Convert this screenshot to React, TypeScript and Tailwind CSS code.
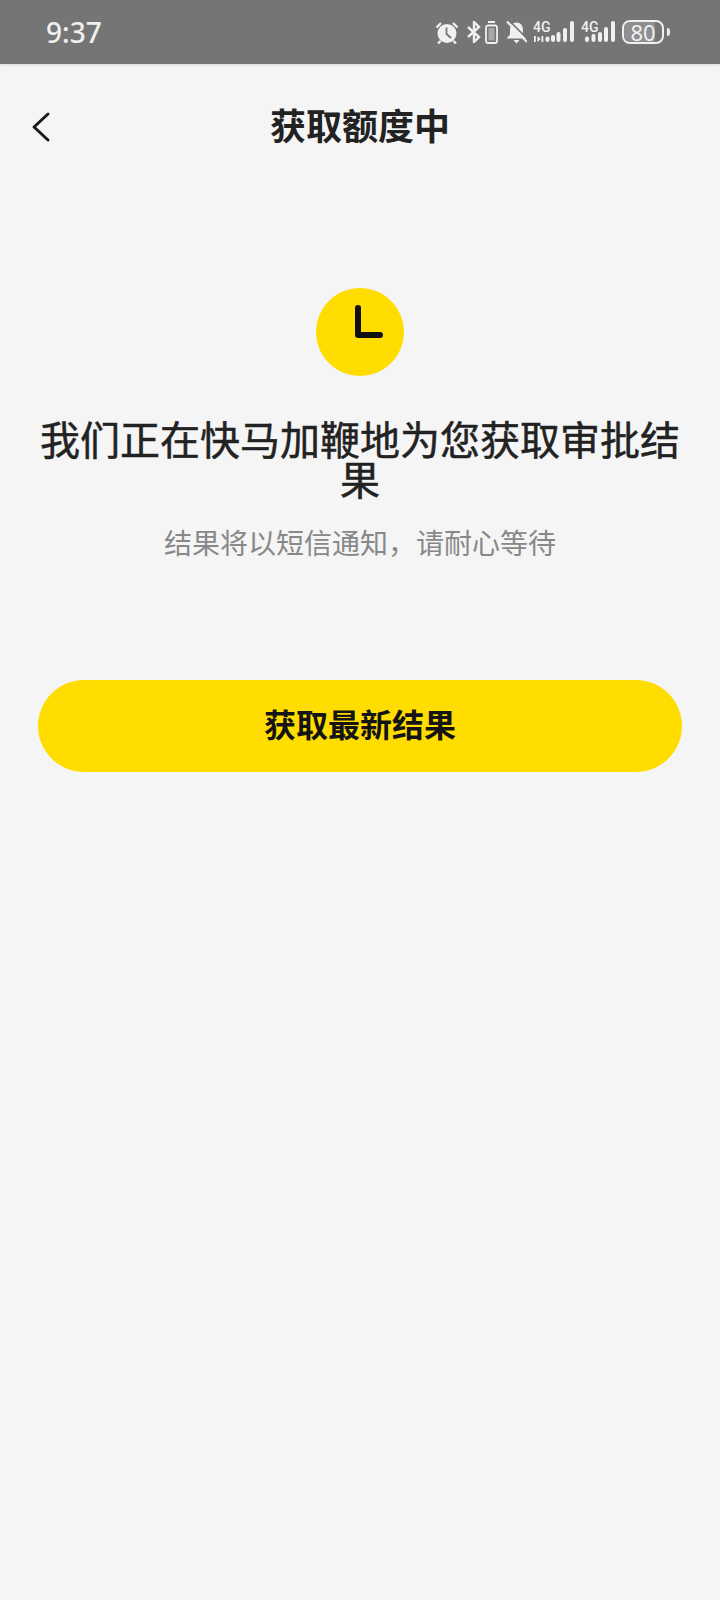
const SANS = "font-['Noto_Sans_CJK_SC','Noto_Sans',sans-serif]";
const LIGHT = "#f0f0f0";

function Alarm() {
  return (
    <svg width="24" height="23" viewBox="0 0 24 23">
      <circle cx="12" cy="12.500" r="9.500" fill={LIGHT} />
      <path d="M11.500 6.500v6.500l4.500 4" fill="none" stroke="#757575" strokeWidth="1.800" />
      <path d="M1.500 6.500L6 2M22.500 6.500L18 2M5.500 20l-2.500 2.500M18.500 20l2.500 2.500" fill="none" stroke={LIGHT} strokeWidth="2.400" />
    </svg>
  );
}

function Bluetooth() {
  return (
    <svg width="14" height="22" viewBox="0 0 14 22" fill="none" stroke={LIGHT} strokeWidth="2.400">
      <path d="M1 6l11 10-5 5V1l5 5L1 16" />
    </svg>
  );
}

function VibrateBattery() {
  return (
    <svg width="13" height="23" viewBox="0 0 13 23">
      <rect x="3" y="0" width="7" height="2" fill={LIGHT} />
      <rect x="1" y="4.500" width="11" height="17.500" rx="2" fill="none" stroke={LIGHT} strokeWidth="1.800" />
      <rect x="3.500" y="7" width="6" height="12.500" fill="#a8a8a8" />
    </svg>
  );
}

function BellOff() {
  return (
    <svg width="21" height="23" viewBox="0 0 21 23">
      <path d="M10.500 1.500c4 0 6.500 3 6.500 7.500v4.500l3.500 4H.5l3.500-4V9c0-4.500 2.500-7.500 6.500-7.500z" fill={LIGHT} />
      <path d="M7.500 19h6l-3 3.500z" fill={LIGHT} />
      <path d="M3.500 0L23 19.500" stroke="#757575" strokeWidth="1.600" />
      <path d="M1 0.500L21 21" stroke={LIGHT} strokeWidth="2.200" />
    </svg>
  );
}

function Signal({ first }: { first: boolean }) {
  const bars = first
    ? [
        [12.500, 15.500],
        [18, 14],
        [23.500, 11],
        [30, 7],
        [37, 0],
      ]
    : [
        [4, 15.500],
        [10.500, 13],
        [17, 11],
        [23, 6],
        [30, 0],
      ];
  return (
    <svg width={first ? 41 : 34} height="28" viewBox={`0 -3 ${first ? 41 : 34} 28`} fill={LIGHT}>
      <text x="0" y="11" fontSize="14" fontWeight="500" fontFamily="Roboto, sans-serif">
        4G
      </text>
      {first ? <path d="M1 15h1.800v6H1zM4.500 15l3.200 3-3.200 3zM8.500 15h1.800v6H8.500z" /> : null}
      {bars.map(([x, y]) => (
        <rect key={x} x={x} y={y} width="4" height={21 - y} rx="2" />
      ))}
    </svg>
  );
}

function Battery() {
  return (
    <div className="flex items-center gap-[3px]">
      <div className="relative h-[24px] w-[42px] rounded-[8px] border-2 border-[#f0f0f0]">
        <div className="h-full w-[31px] rounded-l-[6px] bg-[#8f8f8f]" />
        <span className="absolute inset-0 flex items-center justify-center font-['Noto_Sans',sans-serif] text-[22px] leading-none text-[#f0f0f0]">
          80
        </span>
      </div>
      <div className="h-[8px] w-[3px] rounded-r-full bg-[#f0f0f0]" />
    </div>
  );
}

export default function App() {
  return (
    <div className={`flex h-[1600px] w-[720px] flex-col bg-[#f5f5f5] ${SANS}`}>
      <div className="flex h-16 shrink-0 items-center justify-between bg-[#757575] pl-[46px] pr-[50px] shadow-[0_1px_3px_rgba(0,0,0,0.12)]">
        <span className="font-['Noto_Sans',sans-serif] text-[28px] font-medium leading-none text-[#f0f0f0]">9:37</span>
        <div className="flex items-center">
          <Alarm />
          <div className="ml-2 flex items-center gap-1">
            <Bluetooth />
            <VibrateBattery />
          </div>
          <div className="ml-2"><BellOff /></div>
          <div className="ml-[6px]"><Signal first /></div>
          <div className="ml-[7px]"><Signal first={false} /></div>
          <div className="ml-[7px]"><Battery /></div>
        </div>
      </div>

      <div className="relative flex h-[126px] shrink-0 items-start justify-center pt-[40px]">
        <svg width="20" height="32" viewBox="0 0 20 32" fill="none" className="absolute left-[31px] top-[47px]">
          <path d="M17 3L3 16l14 13" stroke="#1a1a1a" strokeWidth="3" strokeLinecap="round" strokeLinejoin="round" />
        </svg>
        <h1 className="text-[36px] font-bold leading-[40px] text-[#222222]">获取额度中</h1>
      </div>

      <div className="flex flex-col items-center px-[38px] pt-[98px]">
        <div className="flex h-[88px] w-[88px] items-center justify-center rounded-full bg-[#ffdd00]">
          <svg width="88" height="88" viewBox="0 0 88 88" fill="none">
            <path d="M42 20v27h22" stroke="#111111" strokeWidth="6" strokeLinecap="round" strokeLinejoin="round" />
          </svg>
        </div>
        <h2 className="mt-[42px] text-center text-[40px] font-normal leading-[40px] text-[#222222] [-webkit-text-stroke:0.5px_#222222]">
          我们正在快马加鞭地为您获取审批结果
        </h2>
        <p className="mt-[24px] text-center text-[28px] leading-[40px] text-[#888888]">结果将以短信通知，请耐心等待</p>
        <button className="mt-[118px] flex h-[92px] w-full items-center justify-center rounded-full bg-[#ffdd00] pb-[6px] text-[32px] font-bold leading-none text-[#141414]">
          获取最新结果
        </button>
      </div>
    </div>
  );
}
